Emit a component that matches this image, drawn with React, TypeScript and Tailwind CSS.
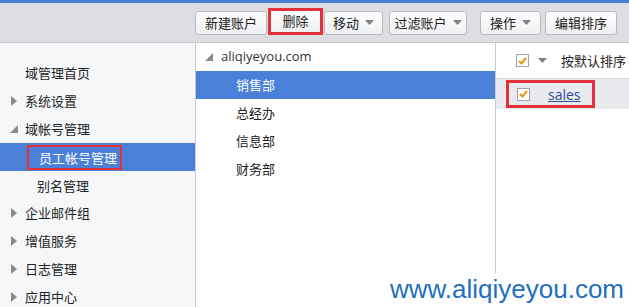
const FONT = "font-['Noto_Sans_CJK_SC','Noto_Sans',sans-serif]";

function Caret() {
  return (
    <svg width="9" height="5" viewBox="0 0 9 5" className="ml-[6px]">
      <path d="M0 0h9L4.5 5z" fill="#7d7f85" />
    </svg>
  );
}

function Btn({ label, caret, w }: { label: string; caret?: boolean; w: string }) {
  return (
    <button
      className={`${w} h-[24px] flex items-center justify-center rounded-[3px] border border-[#b9babd] bg-gradient-to-b from-white to-[#eeeff1] text-[13px] text-[#222]`}
    >
      {label}
      {caret && <Caret />}
    </button>
  );
}

function Closed() {
  return (
    <svg width="6" height="10" viewBox="0 0 6 10">
      <path d="M0 0l6 5-6 5z" fill="#8a8a8a" />
    </svg>
  );
}

function Open() {
  return (
    <svg width="8" height="8" viewBox="0 0 8 8">
      <path d="M8 0v8H0z" fill="#8a8a8a" />
    </svg>
  );
}

function Check() {
  return (
    <span className="w-[13px] h-[13px] flex items-center justify-center border border-[#a3a4a8] bg-white">
      <svg width="9" height="8" viewBox="0 0 9 8">
        <path d="M1 4l2.5 2.5L8 1" stroke="#e8941c" strokeWidth="2" fill="none" />
      </svg>
    </span>
  );
}

const side: { label: string; icon?: "closed" | "open"; sub?: boolean; active?: boolean }[] = [
  { label: "域管理首页" },
  { label: "系统设置", icon: "closed" },
  { label: "域帐号管理", icon: "open" },
  { label: "员工帐号管理", sub: true, active: true },
  { label: "别名管理", sub: true },
  { label: "企业邮件组", icon: "closed" },
  { label: "增值服务", icon: "closed" },
  { label: "日志管理", icon: "closed" },
  { label: "应用中心", icon: "closed" },
];

export default function App() {
  return (
    <div className={`relative w-[629px] h-[307px] overflow-hidden bg-white ${FONT}`}>
      <div className="h-[3px] bg-[#4a7ed6]" />
      <div className="h-[40px] bg-[#dddee3] border-b border-[#c6c7cb] flex items-center justify-end pr-[12px]">
        <Btn label="新建账户" w="w-[72px]" />
        <span className="ml-[1px] mt-[-3px] w-[55px] h-[27px] flex border-[3px] border-[#e3313a]">
          <span className="flex-1 flex items-center justify-center bg-gradient-to-b from-white to-[#eeeff1] text-[13px] text-[#222]">
            删除
          </span>
        </span>
        <span className="ml-[1px]">
          <Btn label="移动" caret w="w-[59px]" />
        </span>
        <span className="ml-[6px]">
          <Btn label="过滤账户" caret w="w-[78px]" />
        </span>
        <span className="ml-[13px]">
          <Btn label="操作" caret w="w-[61px]" />
        </span>
        <span className="ml-[4px]">
          <Btn label="编辑排序" w="w-[72px]" />
        </span>
      </div>
      <div className="flex h-[264px]">
        <div className="w-[195px] bg-[#f6f7f9] pt-[16px] text-[13px] text-[#222]">
          {side.map((s) => (
            <div
              key={s.label}
              className={`h-[28px] flex items-center ${s.active ? "bg-[#4a80d8] text-white" : ""}`}
            >
              {s.sub ? (
                <span
                  className={`ml-[27px] flex items-center h-[25px] pl-[10px] pr-[3px] mt-[1px] ${
                    s.active ? "border-2 border-[#e3313a]" : ""
                  }`}
                >
                  {s.label}
                </span>
              ) : (
                <>
                  <span className="w-[25px] flex items-center justify-center pl-[2px]">
                    {s.icon === "closed" && <Closed />}
                    {s.icon === "open" && <Open />}
                  </span>
                  {s.label}
                </>
              )}
            </div>
          ))}
        </div>
        <div className="w-[301px] border-l border-r border-[#c9cacd] text-[13px] text-[#222]">
          <div className="h-[28px] flex items-center pl-[9px] font-['Open_Sans',sans-serif] text-[#333]">
            <Open />
            <span className="ml-[8px]">aliqiyeyou.com</span>
          </div>
          {["销售部", "总经办", "信息部", "财务部"].map((d, i) => (
            <div
              key={d}
              className={`h-[28px] flex items-center pl-[40px] ${i === 0 ? "bg-[#4a80d8] text-white" : ""}`}
            >
              {d}
            </div>
          ))}
        </div>
        <div className="flex-1 text-[13px] text-[#222]">
          <div className="h-[36px] border-b border-[#dcdde0] flex items-center pl-[20px]">
            <Check />
            <span className="ml-[3px]">
              <Caret />
            </span>
            <span className="ml-[14px]">按默认排序</span>
          </div>
          <div className="h-[30px] bg-[#e9eaed] flex items-center pl-[10px]">
            <span className="flex items-center w-[89px] h-[28px] border-[3px] border-[#e3313a] pl-[8px]">
              <Check />
              <span className="ml-[18px] underline text-[#2a4d9c] font-['Open_Sans',sans-serif] text-[14px]">sales</span>
            </span>
          </div>
        </div>
      </div>
      <div className="absolute right-0 bottom-0 w-[260px] h-[34px] bg-white flex items-end justify-end pr-[5px] pb-[1px]">
        <span className="font-['Liberation_Sans',sans-serif] text-[26px] leading-none text-[#1f6fbf] pb-[4px]">
          www.aliqiyeyou.com
        </span>
      </div>
    </div>
  );
}
